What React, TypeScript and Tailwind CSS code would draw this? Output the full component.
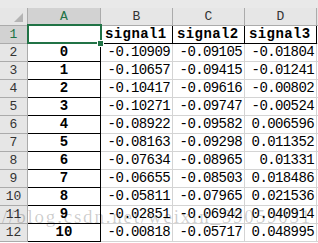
import React from "react";

const rows: [string, string, string, string][] = [
  ["0", "-0.10909", "-0.09105", "-0.01804"],
  ["1", "-0.10657", "-0.09415", "-0.01241"],
  ["2", "-0.10417", "-0.09616", "-0.00802"],
  ["3", "-0.10271", "-0.09747", "-0.00524"],
  ["4", "-0.08922", "-0.09582", "0.006596"],
  ["5", "-0.08163", "-0.09298", "0.011352"],
  ["6", "-0.07634", "-0.08965", "0.01331"],
  ["7", "-0.06655", "-0.08503", "0.018486"],
  ["8", "-0.05811", "-0.07965", "0.021536"],
  ["9", "-0.02851", "-0.06942", "0.040914"],
  ["10", "-0.00818", "-0.05717", "0.048995"],
];

const mono = "font-['Liberation_Mono',monospace]";

export default function App() {
  return (
    <div className={`relative w-[318px] h-[243px] overflow-hidden bg-white text-[14px] tracking-[-0.6px] text-black ${mono}`}>
      {/* strip above the column headers */}
      <div className="h-[8px] bg-[#e9e9e9]" />

      {/* column headers */}
      <div className="flex h-[18px] bg-[#e6e6e6] text-[#333] text-[13px] tracking-normal">
        <div className="relative w-[28px] shrink-0 border-r border-b border-[#ababab]">
          <div className="absolute right-[4px] bottom-[3px] w-0 h-0 border-l-[9px] border-l-transparent border-b-[9px] border-b-[#b4b4b4]" />
        </div>
        <div className="w-[73px] shrink-0 flex items-center justify-center bg-[#d2d2d2] text-[#217346] border-r border-b border-[#ababab]">A</div>
        <div className="w-[72px] shrink-0 flex items-center justify-center border-r border-b border-[#ababab]">B</div>
        <div className="w-[72px] shrink-0 flex items-center justify-center border-r border-b border-[#ababab]">C</div>
        <div className="w-[72px] shrink-0 flex items-center justify-center border-r border-b border-[#ababab]">D</div>
        <div className="flex-1 border-b border-[#ababab]" />
      </div>

      {/* row 1 : titles */}
      <div className="flex h-[18px]">
        <div className="w-[28px] shrink-0 flex items-center justify-center bg-[#d2d2d2] text-[#217346] text-[13px] tracking-normal border-r border-b border-[#ababab]">1</div>
        <div className="w-[73px] shrink-0 border-r border-b border-black" />
        {["signal1", "signal2", "signal3"].map((s) => (
          <div key={s} className="w-[72px] shrink-0 flex items-center pl-[4px] font-bold tracking-[0.4px] border-r border-b border-black">
            {s}
          </div>
        ))}
        <div className="flex-1 border-b border-[#d4d4d4]" />
      </div>

      {/* data rows */}
      {rows.map((r, i) => (
        <div key={i} className="flex h-[18px]">
          <div className="w-[28px] shrink-0 flex items-center justify-center bg-[#e6e6e6] text-[#333] text-[13px] tracking-normal border-r border-b border-[#ababab]">
            {i + 2}
          </div>
          <div className="w-[73px] shrink-0 flex items-center justify-center font-bold tracking-normal border-r border-b border-black">{r[0]}</div>
          <div className="w-[72px] shrink-0 flex items-center justify-end pr-[2px] border-r border-b border-[#d4d4d4]">{r[1]}</div>
          <div className="w-[72px] shrink-0 flex items-center justify-end pr-[2px] border-r border-b border-[#d4d4d4]">{r[2]}</div>
          <div className="w-[72px] shrink-0 flex items-center justify-end pr-[2px] border-r border-b border-[#d4d4d4]">{r[3]}</div>
          <div className="flex-1 border-b border-[#d4d4d4]" />
        </div>
      ))}

      {/* active cell A1 */}
      <div className="absolute left-[27px] top-[24px] w-[75px] h-[20px] border-2 border-[#217346]" />
      <div className="absolute left-[97px] top-[40px] w-[7px] h-[7px] bg-[#217346] border border-white" />

      {/* watermark */}
      <div className="absolute left-[2px] top-[203px] whitespace-nowrap text-[19px] tracking-[1.8px] text-black/20 font-['Liberation_Serif',serif] pointer-events-none">
        //blog.csdn.net/weixin_39059031
      </div>
    </div>
  );
}
